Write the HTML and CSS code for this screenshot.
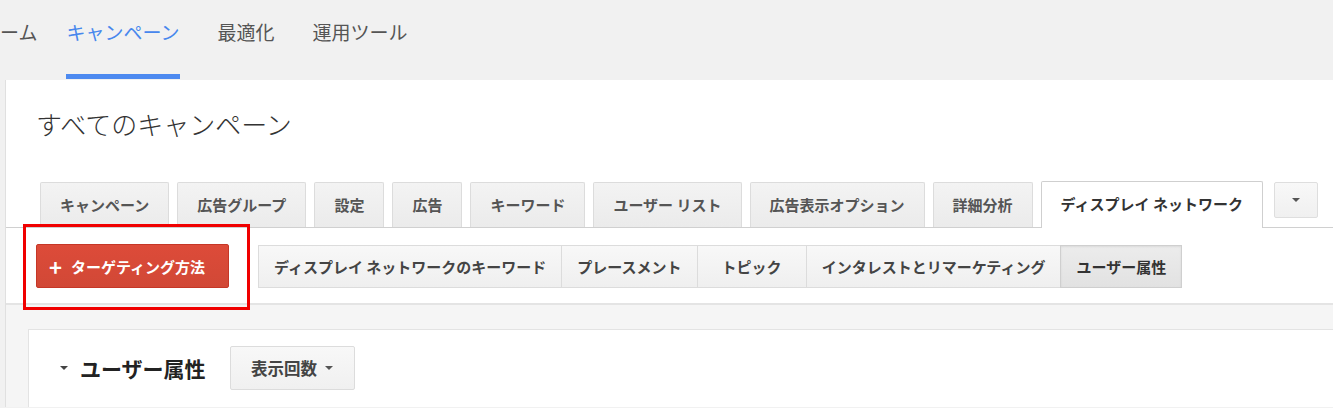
FILE: index.html
```html
<!DOCTYPE html>
<html lang="ja">
<head>
    <meta charset="UTF-8">
    <title>すべてのキャンペーン</title>
    <link rel="stylesheet" href="styles.css">
</head>
<body>

    <!-- Top navigation -->
    <div class="topnav">
        <a class="nav-item">ーム</a>
        <a class="nav-item active">キャンペーン</a>
        <a class="nav-item">最適化</a>
        <a class="nav-item">運用ツール</a>
    </div>

    <div class="panel">
        <h1 class="title">すべてのキャンペーン</h1>

        <!-- Main tabs -->
        <div class="tabs">
            <div class="tab">キャンペーン</div>
            <div class="tab">広告グループ</div>
            <div class="tab">設定</div>
            <div class="tab">広告</div>
            <div class="tab">キーワード</div>
            <div class="tab">ユーザー リスト</div>
            <div class="tab">広告表示オプション</div>
            <div class="tab">詳細分析</div>
            <div class="tab active">ディスプレイ ネットワーク</div>
            <div class="tab-more"><span class="caret"></span></div>
        </div>

        <!-- Sub tabs -->
        <div class="subbar">
            <button class="btn-red"><span class="plus">+</span>ターゲティング方法</button>
            <div class="subtabs">
                <div class="subtab">ディスプレイ ネットワークのキーワード</div>
                <div class="subtab">プレースメント</div>
                <div class="subtab wide">トピック</div>
                <div class="subtab">インタレストとリマーケティング</div>
                <div class="subtab active">ユーザー属性</div>
            </div>
        </div>

        <div class="highlight"></div>

        <div class="content">
            <div class="card">
                <div class="card-head">
                    <span class="caret dark"></span>
                    <h2>ユーザー属性</h2>
                    <button class="btn-gray">表示回数 <span class="caret"></span></button>
                </div>
            </div>
        </div>
    </div>

</body>
</html>
```

FILE: styles.css
```css
body {
    margin: 0;
    background: #f1f1f1;
    font-family: 'Noto Sans CJK JP', 'Noto Sans', sans-serif;
    color: #333;
    overflow: hidden;
}
.topnav {
    display: flex;
    gap: 38px;
    height: 80px;
}
.nav-item {
    font-size: 19px;
    line-height: 64px;
    color: #555;
    border-bottom: 5px solid transparent;
    height: 74px;
    box-sizing: border-box;
}
.nav-item:first-child {
    margin-right: -9px;
}
.nav-item.active {
    color: #4787ed;
    border-bottom-color: #4d8af0;
    height: 79px;
}
.panel {
    position: relative;
    margin-left: 5px;
    background: #fff;
    border-left: 1px solid #e0e0e0;
}
.title {
    margin: 0;
    padding: 26px 0 0 30px;
    font-size: 26px;
    font-weight: 300;
    line-height: 36px;
    color: #333;
}
.tabs {
    display: flex;
    align-items: flex-end;
    gap: 8px;
    margin-top: 39px;
    padding-left: 34px;
    border-bottom: 1px solid #d0d0d0;
    height: 46px;
}
.tab {
    height: 44px;
    line-height: 44px;
    padding: 0 19px;
    font-size: 15px;
    font-weight: bold;
    color: #555;
    background: linear-gradient(#f3f3f3, #ebebeb);
    border: 1px solid #dcdcdc;
    border-bottom: none;
    border-radius: 2px 2px 0 0;
    white-space: nowrap;
}
.tab.active {
    height: 46px;
    margin-bottom: -1px;
    background: #fff;
    border-color: #cfcfcf;
    color: #333;
}
.tab-more {
    width: 42px;
    height: 34px;
    margin: 0 0 9px 3px;
    background: linear-gradient(#f8f8f8, #f0f0f0);
    border: 1px solid #dedede;
    border-radius: 2px;
    display: flex;
    align-items: center;
    justify-content: center;
}
.caret {
    display: inline-block;
    width: 0;
    height: 0;
    border-left: 4px solid transparent;
    border-right: 4px solid transparent;
    border-top: 4px solid #555;
}
.caret.dark {
    border-top-color: #444;
}
.subbar {
    display: flex;
    align-items: flex-start;
    padding: 16px 0 15px 30px;
    border-bottom: 2px solid #e4e4e4;
}
.btn-red {
    height: 44px;
    width: 193px;
    border: 1px solid #c53727;
    border-radius: 2px;
    background: linear-gradient(#dd4b39, #d14836);
    color: #fff;
    font-family: inherit;
    font-size: 15px;
    font-weight: bold;
    display: flex;
    align-items: center;
    padding: 0 0 0 12px;
}
.plus {
    font-size: 22px;
    font-weight: bold;
    margin-right: 9px;
    line-height: 1;
}
.subtabs {
    display: flex;
    margin-left: 30px;
    margin-top: 1px;
}
.subtab {
    height: 41px;
    line-height: 41px;
    padding: 0 15px;
    font-size: 15px;
    font-weight: bold;
    color: #444;
    background: linear-gradient(#f8f8f8, #efefef);
    border: 1px solid #dcdcdc;
    margin-left: -1px;
    white-space: nowrap;
    text-align: center;
}
.subtab.wide {
    min-width: 78px;
}
.subtab.active {
    background: linear-gradient(#ececec, #e2e2e2);
    border-color: #cfcfcf;
    color: #333;
    box-shadow: inset 0 1px 2px rgba(0, 0, 0, 0.08);
}
.highlight {
    position: absolute;
    left: 17px;
    top: 144px;
    width: 221px;
    height: 80px;
    border: 3px solid #f00000;
}
.content {
    background: #f5f5f5;
    padding: 24px 0 0 22px;
    height: 78px;
}
.card {
    background: #fff;
    border: 1px solid #e3e3e3;
    border-right: none;
    border-bottom: none;
    height: 78px;
    padding: 16px 0 0 31px;
    box-sizing: border-box;
}
.card-head {
    display: flex;
    align-items: center;
    height: 44px;
}
.card-head h2 {
    margin: 0 0 0 12px;
    font-size: 21px;
    font-weight: bold;
    color: #222;
}
.btn-gray {
    margin-left: 24px;
    height: 44px;
    width: 125px;
    background: linear-gradient(#f8f8f8, #f0f0f0);
    border: 1px solid #dcdcdc;
    border-radius: 2px;
    font-family: inherit;
    font-size: 16.5px;
    font-weight: bold;
    color: #444;
    display: flex;
    align-items: center;
    justify-content: center;
    gap: 8px;
}
```
